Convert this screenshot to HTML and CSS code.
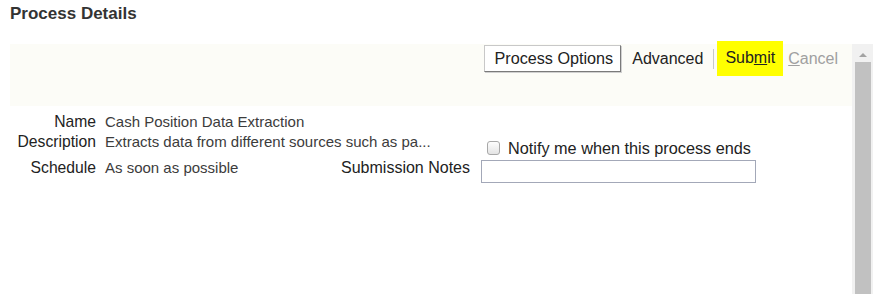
FILE: index.html
```html
<!DOCTYPE html>
<html lang="en">
<head>
  <meta charset="UTF-8" />
  <title>Process Details</title>
  <link rel="stylesheet" href="styles.css">
</head>
<body>

  <h1 class="page-title">Process Details</h1>

  <div class="panel">
    <div class="panel-main">
      <div class="toolbar">
        <button class="btn">Process Options</button>
        <span class="tool-link">Advanced</span>
        <span class="tool-sep"></span>
        <span class="tool-link submit">Sub<u>m</u>it</span>
        <span class="tool-link cancel"><u>C</u>ancel</span>
      </div>

      <div class="details">
        <div class="label">Name</div>
        <div class="value">Cash Position Data Extraction</div>

        <div class="label">Description</div>
        <div class="value wide">Extracts data from different sources such as pa...</div>
        <label class="notify"><input type="checkbox"> Notify me when this process ends</label>

        <div class="label">Schedule</div>
        <div class="value">As soon as possible</div>
        <div class="label label-right">Submission Notes</div>
        <div class="field"><input type="text" class="notes"></div>
      </div>
    </div>

    <div class="scrollbar">
      <div class="scroll-arrow"></div>
      <div class="scroll-thumb"></div>
    </div>
  </div>

</body>
</html>
```

FILE: styles.css
```css
* {
  box-sizing: border-box;
}
body {
  margin: 0;
  padding: 4px 9px 0 10px;
  font-family: "Liberation Sans", Arial, sans-serif;
  color: #222;
  background: #fff;
  height: 294px;
  overflow: hidden;
}

.page-title {
  margin: 0 0 20px 0;
  font-size: 17px;
  line-height: 20px;
  font-weight: bold;
  color: #333;
}

.panel {
  display: flex;
  height: 250px;
}

.panel-main {
  flex: 1;
}

/* toolbar band */
.toolbar {
  display: flex;
  align-items: center;
  justify-content: flex-end;
  height: 62px;
  padding: 1px 14px 34px 0;
  background: #fcfcf7;
  font-size: 16px;
}

.btn {
  height: 27px;
  padding: 0 7px 0 9px;
  margin-right: 11px;
  font-family: inherit;
  font-size: 16.2px;
  color: #222;
  background: #fff;
  border: 1px solid;
  border-color: #c8c8c8 #7a7a7a #7a7a7a #c8c8c8;
  box-shadow: 1px 1px 0 #d0d0d0;
  border-radius: 0;
}

.tool-link {
  line-height: 20px;
  color: #222;
}

.tool-sep {
  width: 1px;
  height: 20px;
  background: #c8c8c8;
  margin: 0 3px 0 10px;
}

.submit {
  background: #ffff00;
  padding: 7px 8px 8px 8px;
  margin: -4px 0;
  line-height: 20px;
}

.cancel {
  color: #a0a0a0;
  margin-left: 5px;
}

/* details form */
.details {
  display: grid;
  grid-template-columns: 95px 235px 141px 275px;
  grid-template-rows: 20px 26px 25px;
  margin-top: 6px;
  line-height: 20px;
}

.label {
  grid-column: 1;
  text-align: right;
  padding-right: 9px;
  font-size: 15.7px;
  color: #222;
  white-space: nowrap;
}

.label-right {
  grid-column: 3;
  padding-right: 11px;
  font-size: 16px;
}

.value {
  grid-column: 2;
  font-size: 15px;
  color: #3c3c3c;
  white-space: nowrap;
}

.value.wide {
  grid-column: 2 / 4;
}

.notify {
  grid-column: 4;
  display: flex;
  align-items: center;
  gap: 8px;
  padding: 6px 0 0 6px;
  font-size: 16.25px;
  color: #222;
  white-space: nowrap;
}

.notify input {
  appearance: none;
  margin: 0;
  width: 13px;
  height: 14px;
  border: 1px solid #a8a8a8;
  border-radius: 3px;
  background: linear-gradient(#fdfdfd, #e4e4e4);
}

.field {
  grid-column: 4;
  padding-top: 2px;
}

.notes {
  display: block;
  width: 275px;
  height: 23px;
  margin: 0;
  border: 1px solid #a3a8b8;
  background: #fff;
  font-family: inherit;
}

/* fake scrollbar */
.scrollbar {
  width: 21px;
  background: #f1f1f1;
  display: flex;
  flex-direction: column;
  align-items: center;
  padding-top: 9px;
}

.scroll-arrow {
  width: 0;
  height: 0;
  border-left: 4px solid transparent;
  border-right: 4px solid transparent;
  border-bottom: 4px solid #a3a3a3;
}

.scroll-thumb {
  flex: 1;
  width: 16px;
  margin-top: 5px;
  background: #c1c1c1;
}
```
